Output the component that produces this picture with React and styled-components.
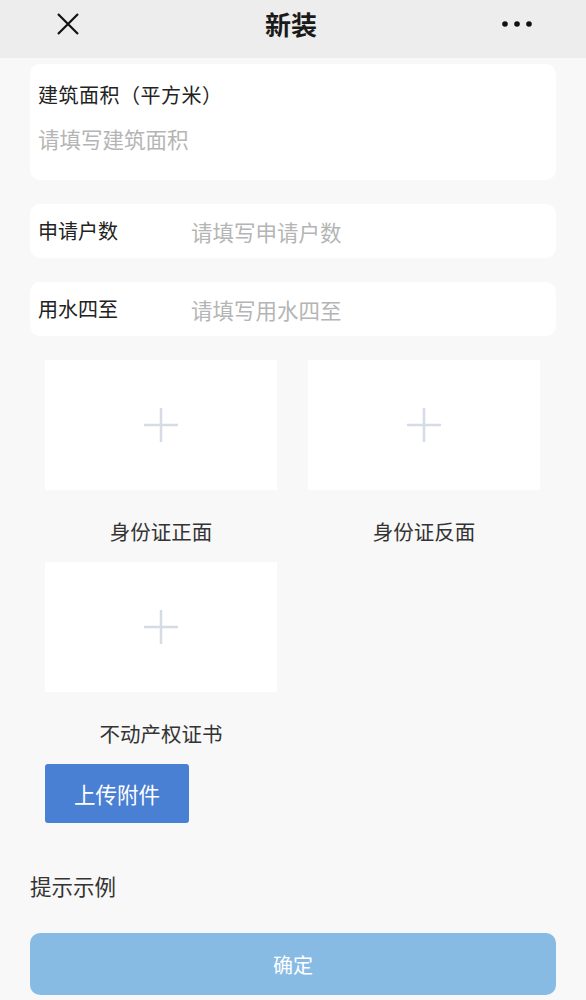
import React from 'react';
import styled, { createGlobalStyle } from 'styled-components';

const GlobalStyle = createGlobalStyle`
  body {
    margin: 0;
    background: #f8f8f8;
    font-family: "Noto Sans CJK SC", "Noto Sans", sans-serif;
  }
`;

const Header = styled.div`
  height: 58px;
  background: #ededed;
  display: flex;
  align-items: center;
  justify-content: space-between;
  padding: 0 53px 11px 55px;
  box-sizing: border-box;
`;

const Title = styled.div`
  font-size: 26px;
  font-weight: bold;
  color: #1a1a1a;
  margin-left: 0;
  line-height: 30px;
`;

const Page = styled.div`
  padding: 6px 30px 0;
`;

const Card = styled.div`
  background: #fff;
  border-radius: 10px;
  margin-bottom: ${p => p.gap ?? 24}px;
`;

const BigCard = styled(Card)`
  height: 116px;
  padding: 16px 8px 0;
  box-sizing: border-box;
`;

const Label = styled.div`
  font-size: 20px;
  color: #222;
  line-height: 30px;
  text-spacing-trim: space-all;
  font-feature-settings: "fwid" 1;
  letter-spacing: 0.5px;
`;

const Placeholder = styled.div`
  font-size: 21.5px;
  color: #b5b5b5;
  line-height: 30px;
  margin-top: 14px;
`;

const Row = styled(Card)`
  height: 54px;
  display: flex;
  align-items: center;
  padding: 0 8px;
  margin-top: 1px;
`;

const RowLabel = styled.div`
  width: 153px;
  font-size: 20px;
  color: #222;
  margin-top: -2px;
`;

const RowInput = styled.div`
  font-size: 21.5px;
  color: #b5b5b5;
`;

const Uploads = styled.div`
  display: grid;
  grid-template-columns: 232px 232px;
  column-gap: 31px;
  padding: 0 45px;
  margin-top: 24px;
`;

const Item = styled.div`
  display: flex;
  flex-direction: column;
  align-items: center;
`;

const Box = styled.div`
  width: 232px;
  height: 130px;
  background: #fff;
  display: flex;
  align-items: center;
  justify-content: center;
`;

const Caption = styled.div`
  font-size: 20.5px;
  color: #333;
  line-height: 28px;
  margin: 27px 0 17px;
`;

const UploadBtn = styled.div`
  width: 144px;
  height: 59px;
  margin-left: 45px;
  background: #4a80d4;
  color: #fff;
  border-radius: 3px;
  font-size: 21.5px;
  display: flex;
  align-items: center;
  justify-content: center;
`;

const Hint = styled.div`
  font-size: 21.5px;
  color: #333;
  margin-top: 42px;
  line-height: 30px;
`;

const Confirm = styled.div`
  height: 62px;
  margin-top: 32px;
  background: #87bbe4;
  border-radius: 10px;
  color: #fff;
  font-size: 20px;
  display: flex;
  align-items: center;
  justify-content: center;
`;

const Plus = () => (
  <svg width="36" height="36" viewBox="0 0 36 36">
    <path d="M18 1v34M1 18h34" stroke="#d6dce6" strokeWidth="2.5" fill="none" />
  </svg>
);

const CloseIcon = () => (
  <svg width="26" height="26" viewBox="0 0 26 26">
    <path d="M3 3l20 20M23 3L3 23" stroke="#111" strokeWidth="2.2" fill="none" />
  </svg>
);

const Dots = () => (
  <svg width="32" height="8" viewBox="0 0 32 8">
    <circle cx="4" cy="4" r="2.8" fill="#111" />
    <circle cx="16" cy="4" r="2.8" fill="#111" />
    <circle cx="28" cy="4" r="2.8" fill="#111" />
  </svg>
);

const docs = ['身份证正面', '身份证反面', '不动产权证书'];

export default function App() {
  return (
    <>
      <GlobalStyle />
      <Header>
        <CloseIcon />
        <Title>新装</Title>
        <Dots />
      </Header>
      <Page>
        <BigCard>
          <Label>建筑面积（平方米）</Label>
          <Placeholder>请填写建筑面积</Placeholder>
        </BigCard>
        <Row>
          <RowLabel>申请户数</RowLabel>
          <RowInput>请填写申请户数</RowInput>
        </Row>
        <Row gap={0}>
          <RowLabel>用水四至</RowLabel>
          <RowInput>请填写用水四至</RowInput>
        </Row>
      </Page>
      <Uploads>
        {docs.map(d => (
          <Item key={d}>
            <Box><Plus /></Box>
            <Caption>{d}</Caption>
          </Item>
        ))}
      </Uploads>
      <UploadBtn>上传附件</UploadBtn>
      <Page>
        <Hint>提示示例</Hint>
        <Confirm>确定</Confirm>
      </Page>
    </>
  );
}
